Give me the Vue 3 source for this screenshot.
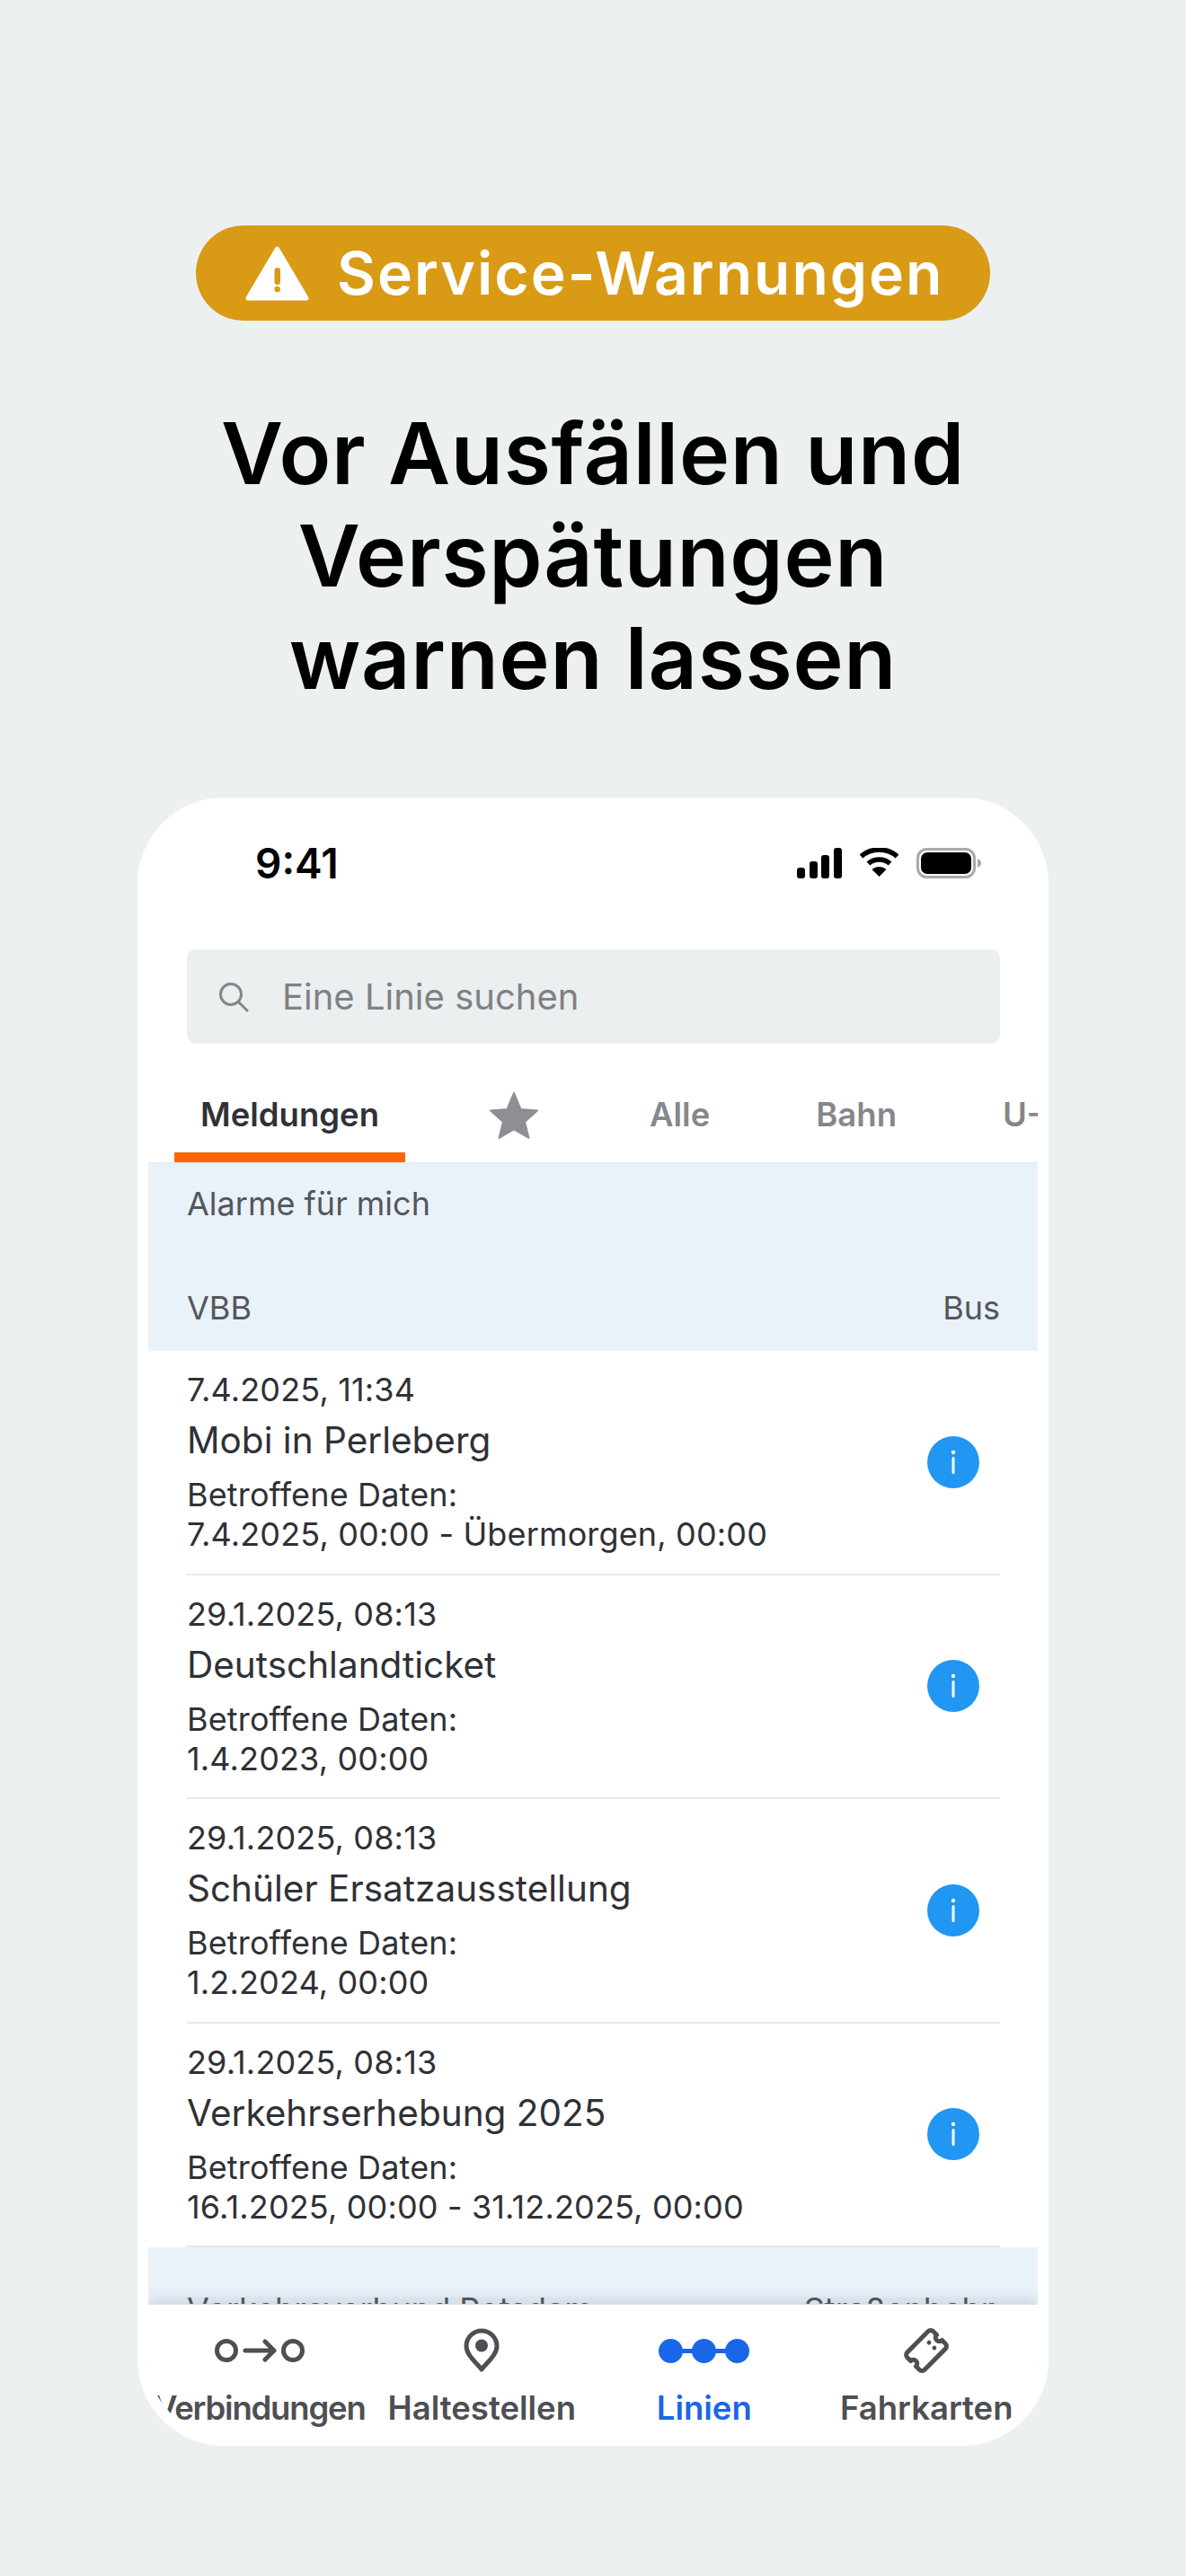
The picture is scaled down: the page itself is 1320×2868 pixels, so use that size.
<script setup>
const items = [
  { date: '7.4.2025, 11:34', title: 'Mobi in Perleberg', range: '7.4.2025, 00:00 - Übermorgen, 00:00' },
  { date: '29.1.2025, 08:13', title: 'Deutschlandticket', range: '1.4.2023, 00:00' },
  { date: '29.1.2025, 08:13', title: 'Schüler Ersatzausstellung', range: '1.2.2024, 00:00' },
  { date: '29.1.2025, 08:13', title: 'Verkehrserhebung 2025', range: '16.1.2025, 00:00 - 31.12.2025, 00:00' },
]
</script>

<template>
  <main class="page">
    <div class="pill">
      <svg class="warn" width="71" height="61" viewBox="0 0 71 61">
        <path d="M35.5 3 L68 58 H3 Z" fill="#fff" stroke="#fff" stroke-width="5" stroke-linejoin="round" />
        <rect x="32.5" y="24" width="6.5" height="19" rx="3.2" fill="#d99a16" />
        <circle cx="35.7" cy="48" r="3.2" fill="#d99a16" />
      </svg>
      <span>Service-Warnungen</span>
    </div>
    <h1 class="headline">Vor Ausfällen und<br />Verspätungen<br />warnen lassen</h1>

    <section class="phone">
      <div class="status">
        <span class="time">9:41</span>
        <div class="status-icons">
          <svg width="50" height="34" viewBox="0 0 50 34">
            <rect x="0" y="22" width="9" height="12" rx="3" />
            <rect x="14" y="15" width="9" height="19" rx="3" />
            <rect x="27" y="8" width="9" height="26" rx="3" />
            <rect x="41" y="0" width="9" height="34" rx="3" />
          </svg>
          <svg width="45" height="32" viewBox="0 0 45 32">
            <path d="M2.5 9.5 C13.5 -0.5 31.5 -0.5 42.5 9.5" fill="none" stroke="#000" stroke-width="5.5" />
            <path d="M10.5 17.5 C17 11.5 28 11.5 34.5 17.5" fill="none" stroke="#000" stroke-width="5.5" />
            <path d="M22.5 32 L14.5 24 C19 20 26 20 30.5 24 Z" />
          </svg>
          <svg class="battery" width="72" height="34" viewBox="0 0 72 34">
            <rect x="1.5" y="1.5" width="63" height="31" rx="10" fill="none" stroke="#a9a9a9" stroke-width="3" />
            <rect x="5" y="5" width="56" height="24" rx="7" />
            <path d="M68 12 C71 13 72 15 72 17 C72 19 71 21 68 22 Z" fill="#a9a9a9" />
          </svg>
        </div>
      </div>

      <div class="screen">
        <div class="search">
          <svg width="34" height="34" viewBox="0 0 34 34" fill="none" stroke="#85878b" stroke-width="3" stroke-linecap="round">
            <circle cx="14" cy="14" r="11.5" />
            <path d="M22.5 22.5 L32 32" />
          </svg>
          <span>Eine Linie suchen</span>
        </div>

        <nav class="tabs">
          <span class="tab tab-active">Meldungen</span>
          <span class="tab tab-star">
            <svg width="58" height="56" viewBox="0 0 58 56">
              <path d="M29 3 L36.5 21 L55 22.5 L41 35 L45.5 53 L29 43.5 L12.5 53 L17 35 L3 22.5 L21.5 21 Z" fill="#8e8f93" stroke="#8e8f93" stroke-width="2" stroke-linejoin="round" />
            </svg>
          </span>
          <span class="tab">Alle</span>
          <span class="tab">Bahn</span>
          <span class="tab">U-Bahn</span>
        </nav>

        <div class="list">
          <div class="band band-alarm"><span>Alarme für mich</span></div>
          <div class="band"><span>VBB</span><span>Bus</span></div>

          <article v-for="item in items" :key="item.title" class="item">
            <div class="item-text">
              <div class="small">{{ item.date }}</div>
              <div class="title">{{ item.title }}</div>
              <div class="small">Betroffene Daten:</div>
              <div class="small">{{ item.range }}</div>
            </div>
            <svg class="info" width="58" height="58" viewBox="0 0 58 58">
              <circle cx="29" cy="29" r="29" fill="#2196f3" />
              <circle cx="29" cy="18" r="2.2" fill="#fff" />
              <rect x="27.5" y="23" width="3" height="19" rx="1.5" fill="#fff" />
            </svg>
          </article>

          <div class="band"><span>Verkehrsverbund Potsdam</span><span>Straßenbahn</span></div>
        </div>

        <footer class="tabbar">
          <div class="bar-item">
            <div class="bar-icon">
              <svg width="100" height="26" viewBox="0 0 100 26" fill="none" stroke="#4e4f54" stroke-width="5" stroke-linecap="round" stroke-linejoin="round">
                <circle cx="13" cy="13" r="10.5" />
                <path d="M34 13 H66 M56 3 L66 13 L56 23" />
                <circle cx="87" cy="13" r="10.5" />
              </svg>
            </div>
            <span class="label-tight">Verbindungen</span>
          </div>
          <div class="bar-item">
            <div class="bar-icon">
              <svg width="40" height="50" viewBox="0 0 40 50">
                <path d="M20 46 C14 38 3 30 3 20 A17 17 0 0 1 37 20 C37 30 26 38 20 46 Z" fill="none" stroke="#4e4f54" stroke-width="5" stroke-linejoin="round" />
                <circle cx="20" cy="19.5" r="7" fill="#4e4f54" />
              </svg>
            </div>
            <span>Haltestellen</span>
          </div>
          <div class="bar-item bar-active">
            <div class="bar-icon">
              <svg width="101" height="27" viewBox="0 0 101 27" fill="#1a66e8">
                <rect x="10" y="11" width="80" height="5" />
                <circle cx="13.5" cy="13.5" r="13.5" />
                <circle cx="50.5" cy="13.5" r="13.5" />
                <circle cx="87.5" cy="13.5" r="13.5" />
              </svg>
            </div>
            <span>Linien</span>
          </div>
          <div class="bar-item">
            <div class="bar-icon">
              <svg width="54" height="54" viewBox="-27 -27 54 54">
                <g transform="rotate(-45) scale(1.05)">
                  <path d="M-15.5 -13 H15.5 a4 4 0 0 1 4 4 V-4 a4 4 0 0 0 0 8 V9 a4 4 0 0 1 -4 4 H-15.5 a4 4 0 0 1 -4 -4 V4 a4 4 0 0 0 0 -8 V-9 a4 4 0 0 1 4 -4 Z" fill="none" stroke="#4e4f54" stroke-width="4.8" stroke-linejoin="round" />
                  <circle cx="8" cy="-4" r="2.3" fill="#4e4f54" />
                  <circle cx="8" cy="4" r="2.3" fill="#4e4f54" />
                </g>
              </svg>
            </div>
            <span>Fahrkarten</span>
          </div>
        </footer>
      </div>
    </section>
  </main>
</template>

<style scoped>
.page {
  width: 1320px;
  height: 2868px;
  box-sizing: border-box;
  padding-top: 251px;
  background: #ecf0f1;
  display: flex;
  flex-direction: column;
  align-items: center;
  font-family: Inter, "Liberation Sans", sans-serif;
  color: #2f3136;
  overflow: hidden;
}
.pill {
  display: flex;
  align-items: center;
  gap: 31px;
  width: 884px;
  height: 106px;
  box-sizing: border-box;
  padding-left: 55px;
  border-radius: 53px;
  background: #d99a16;
  color: #fff;
  font-size: 66px;
  font-weight: 600;
  letter-spacing: 2px;
  line-height: 1;
  white-space: nowrap;
}
.headline {
  margin: 91px 0 0;
  font-size: 95px;
  font-weight: 600;
  letter-spacing: 0.7px;
  line-height: 114px;
  text-align: center;
  color: #000;
}
.phone {
  width: 1014px;
  height: 1835px;
  box-sizing: border-box;
  margin-top: 98px;
  padding: 0 12px 12px;
  background: #fff;
  border-radius: 96px;
  overflow: hidden;
  display: flex;
  flex-direction: column;
}
.status {
  height: 169px;
  flex: none;
  box-sizing: border-box;
  padding: 56px 63px 0 119px;
  display: flex;
  justify-content: space-between;
  align-items: flex-start;
}
.time {
  font-size: 46px;
  font-weight: 600;
  line-height: 34px;
  color: #000;
}
.status-icons {
  display: flex;
  align-items: flex-start;
  gap: 19px;
}
.status-icons svg {
  display: block;
}
.screen {
  flex: 1;
  min-height: 0;
  display: flex;
  flex-direction: column;
  border-radius: 0 0 84px 84px;
  overflow: hidden;
}
.search {
  flex: none;
  margin: 0 42px 0 43px;
  height: 105px;
  border-radius: 10px;
  background: #ebeff0;
  display: flex;
  align-items: center;
  gap: 37px;
  padding-left: 35px;
  font-size: 40px;
  color: #7f8185;
}
.tabs {
  flex: none;
  height: 133px;
  box-sizing: border-box;
  padding-left: 29px;
  display: flex;
  align-items: flex-end;
  border-bottom: 1px solid #e3e8ec;
  font-size: 36.5px;
  font-weight: 600;
  color: #85878b;
  white-space: nowrap;
  overflow: hidden;
}
.tab {
  flex: none;
  height: 132px;
  box-sizing: border-box;
  padding: 57px 59px 0;
  line-height: 44px;
}
.tab-active {
  padding: 57px 29px 0;
  color: #2f3136;
  border-bottom: 11px solid #ff6600;
}
.tab-star {
  padding: 52px 63px 0 92px;
}
.tab-star svg {
  display: block;
}
.list {
  flex: 1;
  min-height: 0;
  overflow: hidden;
}
.band {
  height: 117px;
  box-sizing: border-box;
  padding: 47px 42px 0 43px;
  display: flex;
  justify-content: space-between;
  background: #e9f1f9;
  font-size: 36px;
  line-height: 44px;
  color: #54565c;
}
.band-alarm {
  height: 92px;
  padding-top: 23px;
}
.item {
  height: 249.5px;
  box-sizing: border-box;
  margin: 0 42px 0 43px;
  padding-right: 23px;
  border-bottom: 2px solid #e4e8ea;
  display: flex;
  align-items: center;
  justify-content: space-between;
}
.small {
  font-size: 36px;
  letter-spacing: 0.15px;
  line-height: 44px;
}
.title {
  font-size: 40.5px;
  line-height: 60px;
  margin: 5px 0 8px;
}
.info {
  flex: none;
}
.tabbar {
  flex: none;
  position: relative;
  height: 146px;
  box-sizing: border-box;
  display: grid;
  grid-template-columns: repeat(4, 1fr);
  background: #fff;
  border-top: 1px solid #dde1e5;
  box-shadow: 0 -6px 14px rgba(60, 70, 90, 0.14);
  font-size: 36.5px;
  font-weight: 600;
  color: #4e4f54;
}
.bar-item {
  display: flex;
  flex-direction: column;
  align-items: center;
  padding-top: 24px;
  white-space: nowrap;
  line-height: 44px;
}
.label-tight {
  letter-spacing: -1.2px;
}
.bar-icon {
  height: 54px;
  margin-bottom: 15px;
  display: flex;
  align-items: center;
  justify-content: center;
}
.bar-icon svg {
  display: block;
}
.bar-active {
  color: #1a66e8;
}
</style>
